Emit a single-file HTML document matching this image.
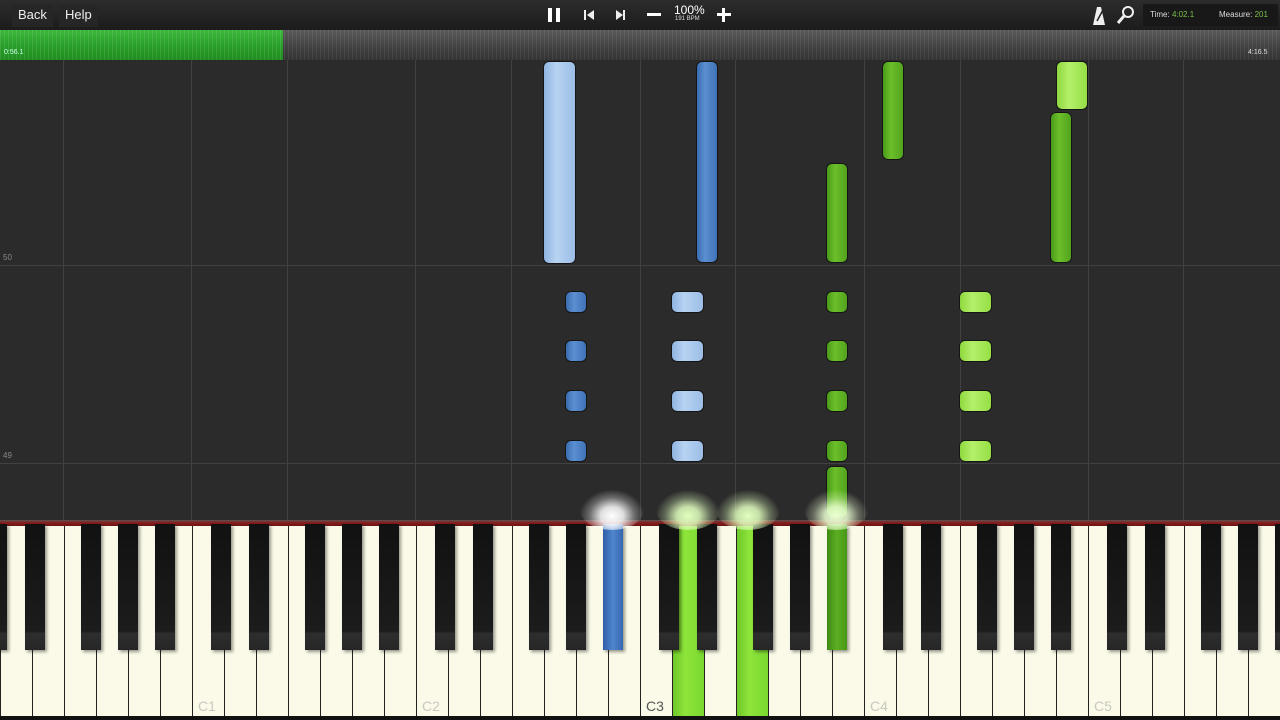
<!DOCTYPE html>
<html><head><meta charset="utf-8"><style>
*{margin:0;padding:0;box-sizing:border-box}
body{width:1280px;height:720px;overflow:hidden;background:#2b2b2b;font-family:"Liberation Sans",sans-serif;position:relative}
.abs{position:absolute}
#top{left:0;top:0;width:1280px;height:30px;background:linear-gradient(#2c2c2c,#1c1c1c)}
.btn{top:5px;height:22px;background:#262626;color:#eee;font-size:13px;line-height:20px;padding:0 6px}
#prog{left:0;top:30px;width:1280px;height:30px;background:repeating-linear-gradient(90deg,rgba(255,255,255,.07) 0 1px,transparent 1px 4px),linear-gradient(#5a5a5a,#444 50%,#333)}
#green{left:0;top:30px;width:283px;height:30px;background:repeating-linear-gradient(90deg,rgba(255,255,255,.1) 0 1px,transparent 1px 4px),linear-gradient(#3bb83b,#2a9f2a 50%,#1f8c1f)}
.vl{top:60px;width:1px;height:462px;background:#414141}
.hl{left:0;width:1280px;height:1px;background:#414141}
.n{border-radius:5px;box-shadow:0 0 0 1px rgba(0,0,0,.5)}
.lb{background:linear-gradient(90deg,#8fb4e0,#b8d3f2 40%,#9cbde6)}
.db{background:linear-gradient(90deg,#3a6cb0,#5b8fd0 40%,#3f72b8)}
.dg{background:linear-gradient(90deg,#4a9a1a,#6cbf2a 40%,#52a31e)}
.lg{background:linear-gradient(90deg,#8ed83e,#b4f06a 40%,#96df45)}
.w{top:526px;width:32px;height:190px;background:#fbfae8;border-left:1px solid #222;}
.b{top:524px;width:20px;height:126px;background:linear-gradient(#111 0,#1c1c1c 85%,#2e2e2e 87%,#262626);box-shadow:2px 2px 3px rgba(0,0,0,.4)}
.lab{top:698px;font-size:14px;color:#c8c8c0}
.glow{border-radius:50%}
</style></head><body>
<div id="top" class="abs"></div>
<div class="abs btn" style="left:12px">Back</div>
<div class="abs btn" style="left:59px">Help</div>
<div class="abs" style="left:548px;top:8px;width:4px;height:14px;background:#fff"></div>
<div class="abs" style="left:556px;top:8px;width:4px;height:14px;background:#fff"></div>
<svg class="abs" style="left:583px;top:8px" width="48" height="14"><rect x="1" y="2" width="2" height="10" fill="#eee"/><path d="M11 2L4 7L11 12Z" fill="#eee"/><path d="M33 2L40 7L33 12Z" fill="#eee"/><rect x="40" y="2" width="2" height="10" fill="#eee"/></svg>
<div class="abs" style="left:647px;top:13px;width:14px;height:3px;background:#fff"></div>
<div class="abs" style="left:674px;top:3px;color:#fff;font-size:12px">100%</div>
<div class="abs" style="left:675px;top:16px;color:#ddd;font-size:6px">191 BPM</div>
<div class="abs" style="left:717px;top:13px;width:14px;height:3px;background:#fff"></div>
<div class="abs" style="left:722px;top:8px;width:3px;height:14px;background:#fff"></div>
<svg class="abs" style="left:1088px;top:4px" width="56" height="22"><path d="M5 21L9 3H13L17 21Z" fill="#eee"/><path d="M9 17L15 6" stroke="#222" stroke-width="1.5"/><circle cx="40" cy="8" r="5" stroke="#eee" stroke-width="2" fill="none"/><path d="M36 12L30 19" stroke="#eee" stroke-width="3"/></svg>
<div class="abs" style="left:1143px;top:4px;width:135px;height:22px;background:#181818"></div>
<div class="abs" style="left:1150px;top:10px;font-size:8px;color:#ddd">Time: <span style="color:#7cc04a">4:02.1</span></div>
<div class="abs" style="left:1219px;top:10px;font-size:8px;color:#ddd">Measure: <span style="color:#7cc04a">201</span></div>
<div id="prog" class="abs"></div>
<div id="green" class="abs"></div>
<div class="abs" style="left:4px;top:49px;font-size:7px;color:#cfe">0:56.1</div>
<div class="abs" style="left:1248px;top:49px;font-size:7px;color:#ddd">4:16.5</div>
<div class="abs hl" style="top:265px"></div>
<div class="abs hl" style="top:463px"></div>
<div class="abs" style="left:3px;top:253px;font-size:8px;color:#888">50</div>
<div class="abs" style="left:3px;top:451px;font-size:8px;color:#888">49</div>
<div id="grid"></div>
<div class="abs n lb" style="left:544px;top:62px;width:31px;height:201px"></div>
<div class="abs n db" style="left:697px;top:62px;width:20px;height:200px"></div>
<div class="abs n dg" style="left:827px;top:164px;width:20px;height:98px"></div>
<div class="abs n dg" style="left:883px;top:62px;width:20px;height:97px"></div>
<div class="abs n lg" style="left:1057px;top:62px;width:30px;height:47px"></div>
<div class="abs n dg" style="left:1051px;top:113px;width:20px;height:149px"></div>
<div id="sq"></div>
<div class="abs n dg" style="left:827px;top:467px;width:20px;height:50px"></div>
<div class="abs" style="left:0;top:520px;width:1280px;height:6px;background:linear-gradient(#555,#8a1f1f 40%,#6a1515)"></div>
<div class="abs" style="left:0;top:716px;width:1280px;height:4px;background:#111"></div>
<div id="keys"></div>
<script>
var g='';[63,191,287,415,511,640,735,864,960,1088,1183].forEach(function(x){g+='<div class="abs vl" style="left:'+x+'px"></div>'});
document.getElementById('grid').innerHTML=g;
var s='';[292,341,391,441].forEach(function(y){
s+='<div class="abs n db" style="left:566px;top:'+y+'px;width:20px;height:20px"></div>';
s+='<div class="abs n lb" style="left:672px;top:'+y+'px;width:31px;height:20px"></div>';
s+='<div class="abs n dg" style="left:827px;top:'+y+'px;width:20px;height:20px"></div>';
s+='<div class="abs n lg" style="left:960px;top:'+y+'px;width:31px;height:20px"></div>';});
document.getElementById('sq').innerHTML=s;
var k='';
for(var i=0;i<40;i++){var bg='#fbfae8';if(i==21||i==23)bg='linear-gradient(90deg,#6ec82a,#8ee43a 40%,#7ad830)';
k+='<div class="abs w" style="left:'+(i*32)+'px;background:'+bg+'"></div>';}
var bo={0:3,2:-5,3:0,4:5,6:-3};
k+='<div class="abs b" style="left:-13px"></div>';
for(var i=0;i<40;i++){var m=i%7;if(m in bo){var c=(i+1)*32+bo[m];var bg='';
if(i==18)bg='background:linear-gradient(90deg,#2f5fa8,#4f86cc 50%,#3567b0)';
if(i==25)bg='background:linear-gradient(90deg,#3f8a14,#5cae22 50%,#469816)';
k+='<div class="abs b" style="left:'+(c-10)+'px;'+bg+'"></div>';}}
[[206,'C1','#c8c8c0'],[430,'C2','#c8c8c0'],[654,'C3','#555'],[878,'C4','#c8c8c0'],[1102,'C5','#c8c8c0']].forEach(function(l){k+='<div class="abs lab" style="left:'+(l[0]-8)+'px;color:'+l[2]+'">'+l[1]+'</div>'});
[[612,'255,255,255'],[688,'225,255,190'],[748,'225,255,190'],[836,'235,255,210']].forEach(function(q){k+='<div class="abs glow" style="left:'+(q[0]-32)+'px;top:490px;width:64px;height:40px;background:radial-gradient(ellipse at 50% 65%,rgba('+q[1]+',1) 0,rgba('+q[1]+',.85) 25%,rgba('+q[1]+',.3) 50%,rgba('+q[1]+',0) 72%)"></div>'});
document.getElementById('keys').innerHTML=k;
</script>
</body></html>
